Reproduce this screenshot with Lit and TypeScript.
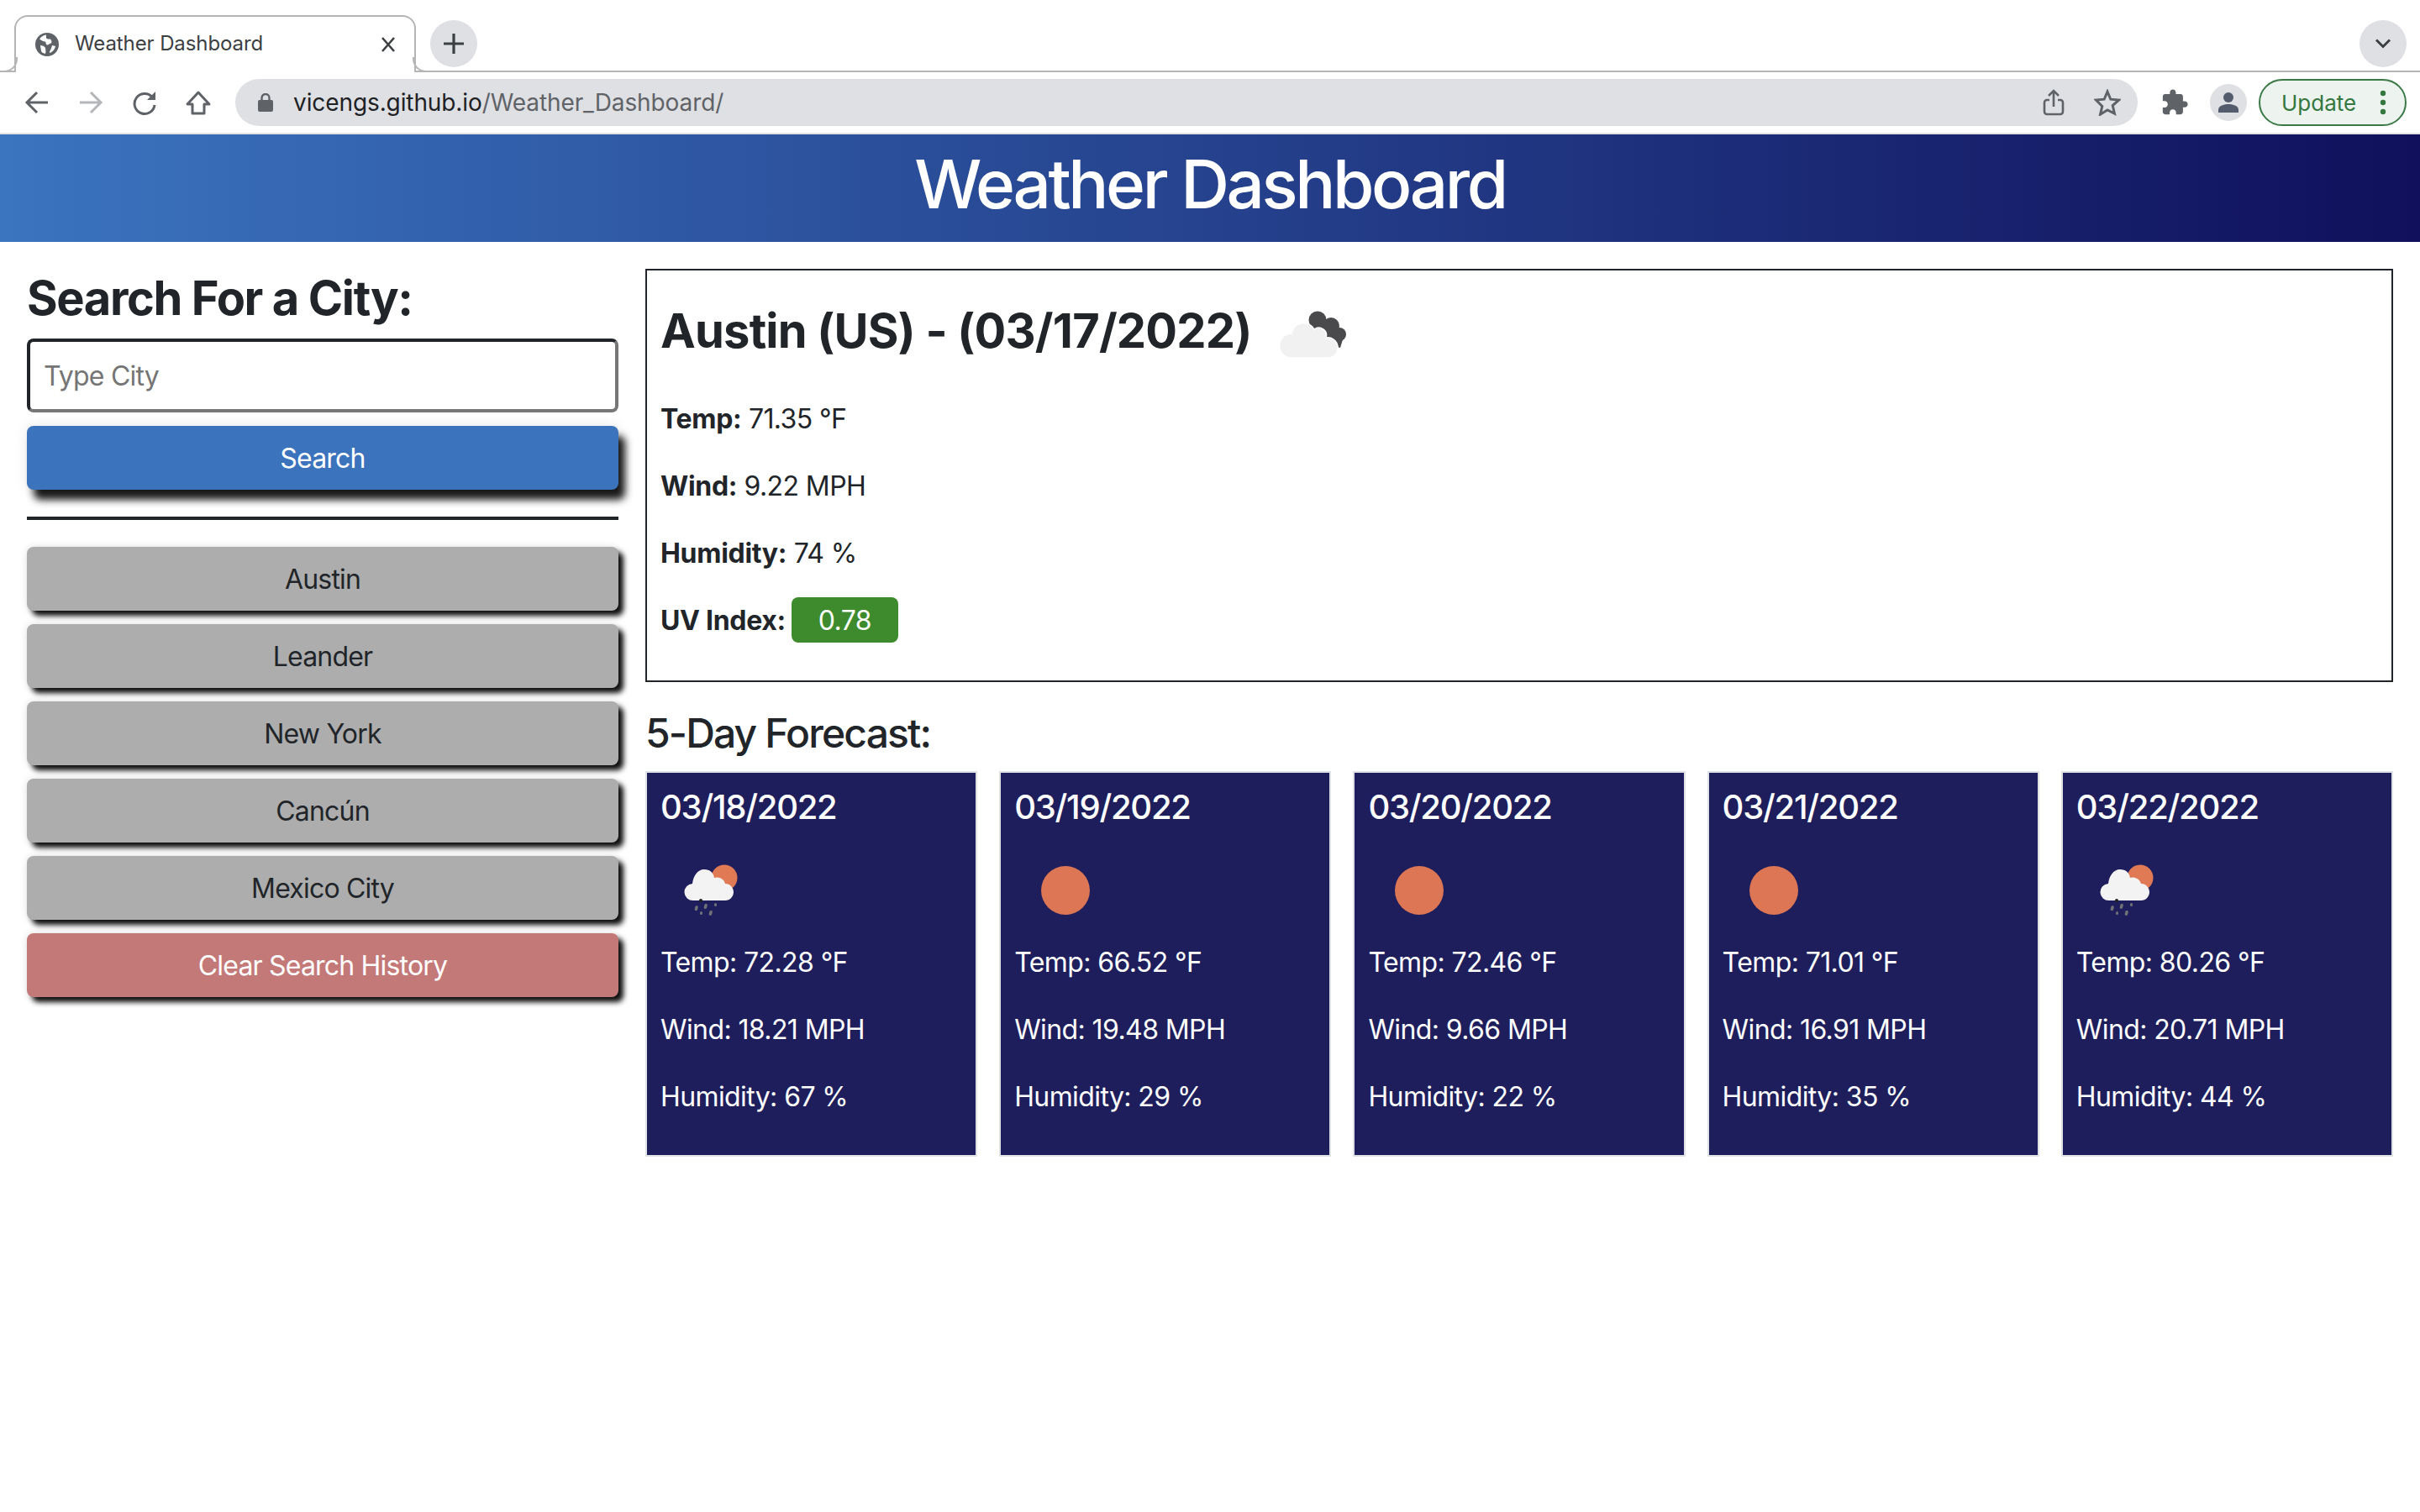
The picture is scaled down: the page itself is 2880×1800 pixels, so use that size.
import { LitElement, html, css } from "lit";
import { customElement } from "lit/decorators.js";

const cities = ["Austin", "Leander", "New York", "Cancún", "Mexico City"];
const days = [
  { date: "03/18/2022", icon: "rain", temp: "72.28", wind: "18.21", hum: "67" },
  { date: "03/19/2022", icon: "sun", temp: "66.52", wind: "19.48", hum: "29" },
  { date: "03/20/2022", icon: "sun", temp: "72.46", wind: "9.66", hum: "22" },
  { date: "03/21/2022", icon: "sun", temp: "71.01", wind: "16.91", hum: "35" },
  { date: "03/22/2022", icon: "rain", temp: "80.26", wind: "20.71", hum: "44" },
];

const sunIcon = html`<svg class="wx" viewBox="0 0 100 100"><circle cx="50" cy="50" r="29" fill="#dd7655"/></svg>`;
const rainIcon = html`<svg class="wx" viewBox="0 0 100 100">
  <circle cx="65" cy="35" r="15.5" fill="#e07a55"/>
  <path fill="#f3f3f4" d="M28 62a10 10 0 0 1-1-20c1-9 6-17 14-17 7 0 11 4 12 10 6-2 12 2 13 7 6 0 10 5 10 10s-4 10-10 10z"/>
  <g fill="#6f7176"><rect x="30" y="68" width="3.5" height="6" rx="1.5" transform="rotate(15 31 71)"/><rect x="41" y="66" width="3.5" height="6" rx="1.5" transform="rotate(15 43 69)"/><rect x="53" y="65" width="3" height="4" rx="1.5"/><rect x="36" y="75" width="3" height="4" rx="1.5"/><rect x="47" y="74" width="3.5" height="6" rx="1.5" transform="rotate(15 49 77)"/></g>
  <circle cx="37" cy="62" r="2" fill="#222"/>
</svg>`;
const cloudsIcon = html`<svg class="wx" viewBox="0 0 100 100">
  <g fill="#4a4a4d"><circle cx="58" cy="33" r="10.5"/><circle cx="74" cy="40" r="10"/><circle cx="84" cy="50" r="8"/><path d="M50 36L90 50 85 66 55 60z"/></g>
  <path fill="#f1f1f1" stroke="#fff" stroke-width="1.5" d="M27 78A14.500 14.500 0 0 1 27 49A14.500 14.500 0 0 1 54 44A9 9 0 0 1 68 54A11.500 11.500 0 0 1 72 78Z"/>
</svg>`;

@customElement("app-root")
export class AppRoot extends LitElement {
  static styles = css`
    :host { display: block; width: 2880px; min-height: 1800px; background: #fff; color: #212529; font-family: Inter, "Liberation Sans", sans-serif; }
    * { box-sizing: border-box; }
    svg { display: block; flex: none; }
    .strip { height: 86px; border-bottom: 2px solid #b5b5b5; display: flex; padding: 18px 16px 0 17px; }
    .tab { position: relative; width: 478px; height: 68px; background: #fff; border: 2px solid #b5b5b5; border-bottom: 0; border-radius: 16px 16px 0 0; display: flex; align-items: center; padding: 0 22px 0 23px; font-size: 24px; color: #3c4043; }
    .tab::before, .tab::after { content: ""; position: absolute; bottom: 0; width: 17px; height: 16px; border-bottom: 2px solid #b5b5b5; }
    .tab::before { left: -17px; border-right: 2px solid #b5b5b5; border-radius: 0 0 16px 0; }
    .tab::after { right: -17px; border-left: 2px solid #b5b5b5; border-radius: 0 0 0 16px; }
    .tab .title { flex: 1; margin-left: 19px; letter-spacing: -.1px; white-space: nowrap; color: #3c4043; line-height: 24px; padding-bottom: 2px; }
    .round { width: 56px; height: 56px; border-radius: 50%; background: #dfe0e4; display: flex; align-items: center; justify-content: center; margin-top: 6px; }
    .newtab { margin-left: 17px; }
    .spacer { flex: 1; }
    .toolbar { height: 74px; border-bottom: 2px solid #e4e4e4; display: flex; align-items: center; padding: 0 16px 0 12px; }
    .slot { width: 64px; height: 56px; display: flex; align-items: center; justify-content: center; flex: none; }
    .omni { flex: 1; height: 56px; margin: 0 12px; background: #dfe0e3; border-radius: 28px; display: flex; align-items: center; padding: 0 4px 0 27px; font-size: 28px; color: #5f6368; }
    .url { flex: 1; margin-left: 24px; white-space: nowrap; letter-spacing: -.1px; }
    .url b { font-weight: 400; color: #202124; }
    .avatar { width: 44px; height: 44px; border-radius: 50%; background: #dfe0e4; display: flex; align-items: center; justify-content: center; }
    .update { width: 176px; height: 56px; margin-left: 4px; border: 2px solid #3b7a46; border-radius: 28px; background: #edf4ef; color: #34783f; font-size: 26px; display: flex; align-items: center; padding: 0 22px 0 25px; justify-content: space-between; }
    header { height: 128px; padding-bottom: 10px; background: linear-gradient(to right, #3b74bf, #10105c); display: flex; align-items: center; justify-content: center; }
    h1 { margin: 0; font-size: 80px; font-weight: 500; color: #fff; line-height: 96px; letter-spacing: -3.4px; }
    .page { display: flex; gap: 32px; padding: 32px 32px 0; }
    aside { width: 704px; flex: none; }
    aside h3 { margin: 0 0 16px; font-size: 56px; height: 67px; line-height: 70px; font-weight: 700; letter-spacing: -1.4px; }
    .input { display: block; width: 100%; height: 88px; border: 4px solid; border-color: #212529 #767676 #767676 #212529; border-radius: 8px; padding: 0 16px; font: 32px Inter, sans-serif; letter-spacing: -.8px; color: #212529; background: #fff; margin: 0 0 16px; }
    .input::placeholder { color: #757575; opacity: 1; }
    .btn { display: flex; align-items: center; justify-content: center; width: 100%; height: 76px; border-radius: 8px; font-size: 32px; letter-spacing: -.8px; box-shadow: 6px 6px 6px rgba(0,0,0,.95), 0 0 10px rgba(0,0,0,.12); }
    .search { background: #3c73bd; color: #fff; box-shadow: 8px 12px 10px rgba(0,0,0,.9), 0 0 16px rgba(0,0,0,.1); }
    .rule { height: 4px; background: #212529; margin: 32px 0; }
    .list { display: flex; flex-direction: column; gap: 16px; }
    .hist { background: #adadad; color: #212529; }
    .clear { background: #c47979; color: #fff; }
    main { flex: 1; min-width: 0; }
    .now { border: 2px solid #212529; padding: 16px; height: 492px; }
    .now h2 { margin: 10px 0 26px; height: 100px; display: flex; align-items: center; font-size: 56px; font-weight: 700; white-space: nowrap; letter-spacing: -.8px; }
    .now h2 span { padding-bottom: 8px; }
    .now h2 svg { margin-left: 20px; }
    .wx { width: 100px; height: 100px; }
    .stat { height: 48px; line-height: 50px; font-size: 32px; margin-bottom: 32px; white-space: pre; letter-spacing: -.6px; }
    .stat b { font-weight: 700; letter-spacing: -.3px; }
    .uv { display: flex; align-items: center; margin: 0; }
    .uv b { padding-top: 2px; }
    .badge { width: 127px; height: 54px; line-height: 56px; margin-left: 7px; background: #3e8b2d; color: #fff; border-radius: 8px; text-align: center; }
    h4 { margin: 32px 0 16px; font-size: 48px; line-height: 58px; font-weight: 500; letter-spacing: -1.85px; }
    .cards { display: grid; grid-template-columns: repeat(5, 1fr); gap: 26px; }
    .card { height: 459px; background: #1e1e5c; border: 2px solid #dee2e6; padding: 16px; color: #fff; }
    .card h5 { margin: 0 0 26px; font-size: 40px; height: 48px; line-height: 50px; font-weight: 500; letter-spacing: -1.25px; }
    .card .wx { margin: 0 0 11px 11px; }
    .card .stat { margin-bottom: 32px; }
  </style>`;

  render() {
    return html`
      <div class="strip">
        <div class="tab">
          <svg width="28" height="28" viewBox="0 0 28 28"><circle cx="14" cy="14" r="14" fill="#5f6368"/><path fill="#fff" d="M13 2.500c-3 .5-6 2-8 5 2 1 4 3 7 3 1 1 0 3 2 4 2 0 3-2 5-2 1-2 0-4-1-5-2 0-4 0-5-1zM6 15c2 0 5 1 6 3 0 2 1 4 0 7-2-.5-4-1-5-3 0-2-1-5-1-7zM20 15l4 1c-.5 3-3 7-7 8 0-3 2-4 3-9z"/></svg>
          <span class="title">Weather Dashboard</span>
          <svg width="18" height="18" viewBox="0 0 18 18"><path d="M2 1l14 16M16 1L2 17" stroke="#3c4043" stroke-width="2.6" fill="none"/></svg>
        </div>
        <div class="round newtab"><svg width="26" height="26" viewBox="0 0 26 26"><path d="M13 1v24M1 13h24" stroke="#3c4043" stroke-width="3.2" fill="none"/></svg></div>
        <div class="spacer"></div>
        <div class="round"><svg width="20" height="14" viewBox="0 0 20 14"><path d="M2 2.500l8 8 8-8" stroke="#3c4043" stroke-width="3" fill="none"/></svg></div>
      </div>
      <div class="toolbar">
        <div class="slot"><svg width="32" height="32" viewBox="0 0 32 32"><path d="M29 16H4M16 4L4 16l12 12" stroke="#5f6368" stroke-width="3" fill="none"/></svg></div>
        <div class="slot"><svg width="32" height="32" viewBox="0 0 32 32"><path d="M3 16h25M16 4l12 12-12 12" stroke="#b4b6b9" stroke-width="3" fill="none"/></svg></div>
        <div class="slot"><svg width="32" height="32" viewBox="0 0 32 32"><path d="M25 9.500A12 12 0 1 0 28 19" stroke="#5f6368" stroke-width="3" fill="none"/><path d="M29 3v10H19z" fill="#5f6368"/></svg></div>
        <div class="slot"><svg width="32" height="32" viewBox="0 0 32 32"><path d="M16 4L3 18h6v11h14V18h6z" stroke="#5f6368" stroke-width="3" stroke-linejoin="round" fill="none"/></svg></div>
        <div class="omni">
          <svg width="18" height="22" viewBox="0 0 18 22"><rect y="8" width="18" height="14" rx="2" fill="#5f6368"/><path d="M4.500 9V5.500a4.500 4.500 0 0 1 9 0V9" stroke="#5f6368" stroke-width="2.4" fill="none"/></svg>
          <span class="url"><b>vicengs.github.io</b>/Weather_Dashboard/</span>
          <div class="slot"><svg width="26" height="32" viewBox="0 0 26 32"><path d="M8 13H5a3 3 0 0 0-3 3v11a3 3 0 0 0 3 3h16a3 3 0 0 0 3-3V16a3 3 0 0 0-3-3h-3M13 21V2M7 8l6-6 6 6" stroke="#5f6368" stroke-width="2.6" fill="none"/></svg></div>
          <div class="slot"><svg width="32" height="32" viewBox="0 0 32 32"><path d="M16 3l3.800 9.200 9.900.8-7.500 6.500 2.300 9.700L16 25l-8.500 5.200 2.300-9.700L2.300 13l9.900-.8z" stroke="#5f6368" stroke-width="3" stroke-linejoin="miter" fill="none"/></svg></div>
        </div>
        <div class="slot"><svg width="34" height="34" viewBox="0 0 24 24"><path fill="#5f6368" d="M20.500 11H19V7c0-1.100-.9-2-2-2h-4V3.500C13 2.120 11.880 1 10.500 1S8 2.120 8 3.500V5H4c-1.100 0-1.990.9-1.990 2v3.800H3.500c1.490 0 2.700 1.210 2.700 2.700s-1.210 2.700-2.700 2.700H2V20c0 1.100.9 2 2 2h3.800v-1.500c0-1.490 1.210-2.700 2.700-2.700 1.490 0 2.700 1.210 2.700 2.700V22H17c1.100 0 2-.9 2-2v-4h1.500c1.380 0 2.500-1.120 2.500-2.500S21.880 11 20.500 11z"/></svg></div>
        <div class="slot"><div class="avatar"><svg width="26" height="26" viewBox="0 0 26 26"><circle cx="13" cy="7" r="6" fill="#535b6c"/><path d="M1 25v-3c0-5 6-7 12-7s12 2 12 7v3z" fill="#535b6c"/></svg></div></div>
        <div class="update"><span>Update</span><svg width="8" height="30" viewBox="0 0 8 30"><circle cx="4" cy="4" r="3.200" fill="#34783f"/><circle cx="4" cy="15" r="3.200" fill="#34783f"/><circle cx="4" cy="26" r="3.200" fill="#34783f"/></svg></div>
      </div>
      <header><h1>Weather Dashboard</h1></header>
      <div class="page">
        <aside>
          <h3>Search For a City:</h3>
          <input class="input" placeholder="Type City" />
          <div class="btn search">Search</div>
          <div class="rule"></div>
          <div class="list">
            ${cities.map((c) => html`<div class="btn hist">${c}</div>`)}
            <div class="btn clear">Clear Search History</div>
          </div>
        </aside>
        <main>
          <section class="now">
            <h2><span>Austin (US) - (03/17/2022)</span>${cloudsIcon}</h2>
            <div class="stat"><b>Temp:</b> 71.35 °F</div>
            <div class="stat"><b>Wind:</b> 9.22 MPH</div>
            <div class="stat"><b>Humidity:</b> 74 %</div>
            <div class="stat uv"><b>UV Index:</b><span class="badge">0.78</span></div>
          </section>
          <h4>5-Day Forecast:</h4>
          <div class="cards">
            ${days.map((d) => html`<div class="card">
              <h5>${d.date}</h5>
              ${d.icon === "sun" ? sunIcon : rainIcon}
              <div class="stat">Temp: ${d.temp} °F</div>
              <div class="stat">Wind: ${d.wind} MPH</div>
              <div class="stat">Humidity: ${d.hum} %</div>
            </div>`)}
          </div>
        </main>
      </div>
    `;
  }
}
